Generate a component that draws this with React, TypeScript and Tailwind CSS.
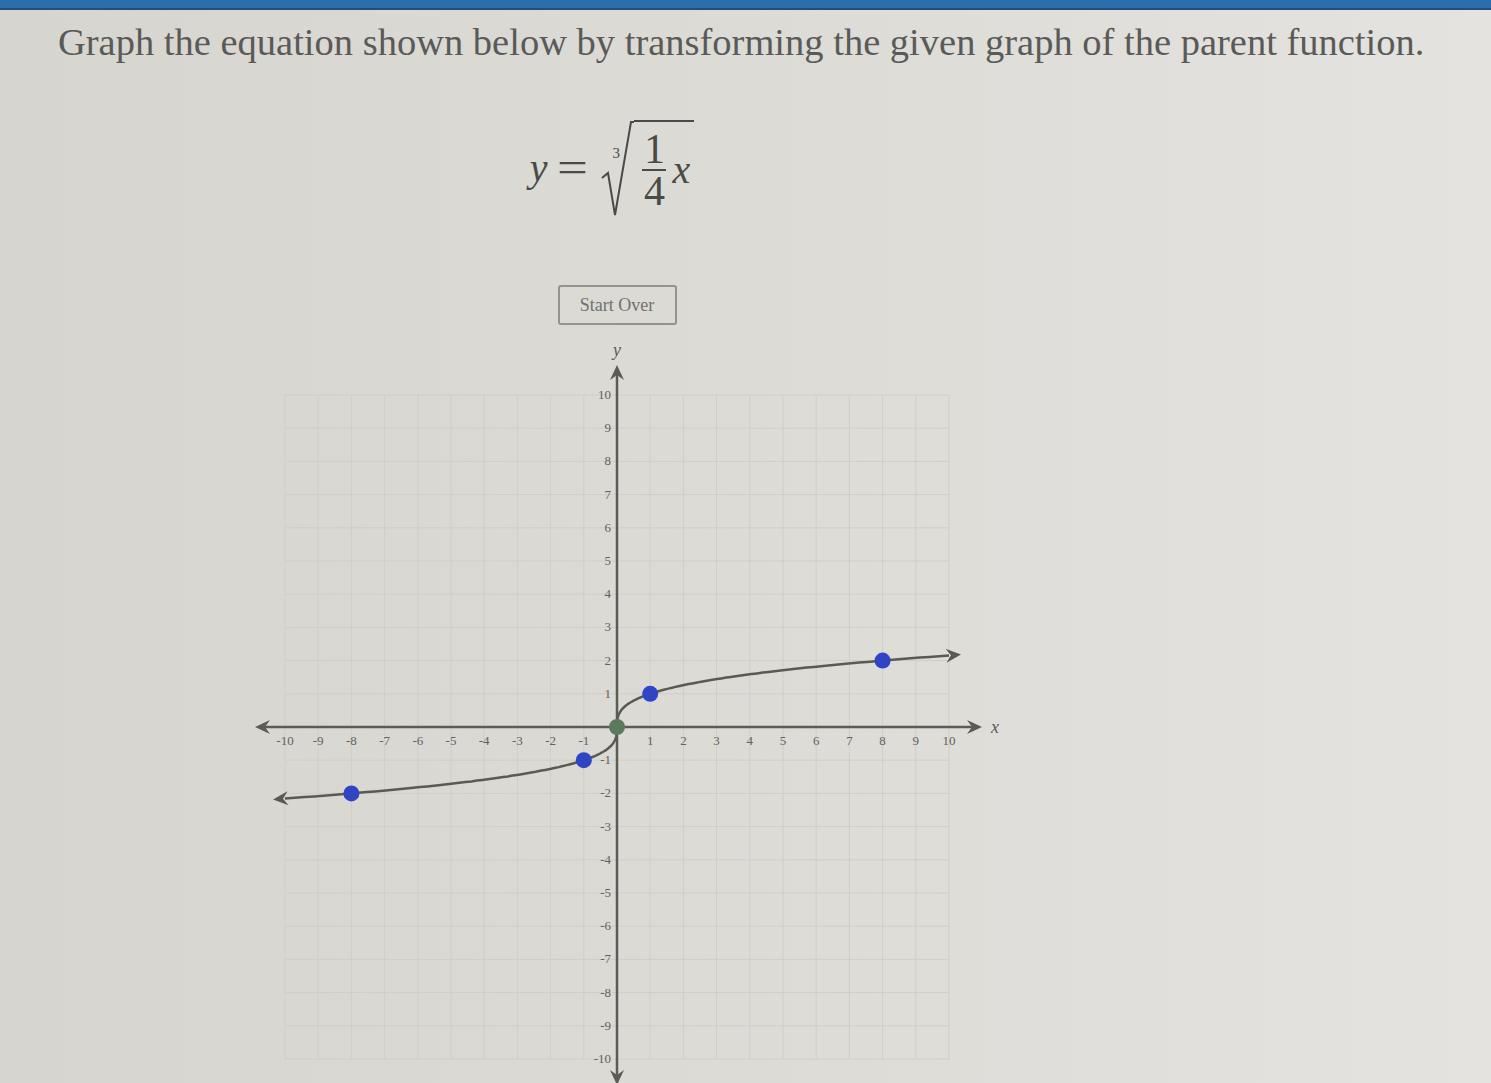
import React from "react";

const U = 33.2;
const OX = 617;
const OY = 727;
const px = (x: number) => OX + U * x;
const py = (y: number) => OY - U * y;
const ticks = Array.from({ length: 21 }, (_, i) => i - 10);

const serif = { fontFamily: '"Liberation Serif", "DejaVu Serif", serif' };

// arrowhead with a notch, tip at (x,y) pointing along angle a (radians)
const arrow = (x: number, y: number, a: number) => {
  const L = 15;
  const W = 7;
  const N = 10;
  const c = Math.cos(a);
  const s = Math.sin(a);
  const p = (dx: number, dy: number) =>
    `${(x + dx * c - dy * s).toFixed(1)},${(y + dx * s + dy * c).toFixed(1)}`;
  return [p(0, 0), p(-L, -W), p(-N, 0), p(-L, W)].join(" ");
};

const Graph = () => {
  const tMax = Math.cbrt(10);
  const pts: string[] = [];
  for (let i = 0; i <= 200; i++) {
    const t = -tMax + (2 * tMax * i) / 200;
    pts.push(`${px(t * t * t).toFixed(1)},${py(t).toFixed(1)}`);
  }
  const slope = 1 / (3 * tMax * tMax);
  const ang = Math.atan2(-slope, 1);
  return (
    <svg width={780} height={748} viewBox="227 335 780 748" className="block mx-auto">
      {ticks.map((i) => (
        <g key={i} stroke="#cfcec9" strokeWidth={1}>
          <line x1={px(i)} y1={py(10)} x2={px(i)} y2={py(-10)} />
          <line x1={px(-10)} y1={py(i)} x2={px(10)} y2={py(i)} />
        </g>
      ))}
      <g stroke="#5c5c57" strokeWidth={2.5}>
        <line x1={262} y1={OY} x2={975} y2={OY} />
        <line x1={OX} y1={372} x2={OX} y2={1078} />
      </g>
      <g fill="#5c5c57">
        <polygon points={arrow(982, OY, 0)} />
        <polygon points={arrow(255, OY, Math.PI)} />
        <polygon points={arrow(OX, 365, -Math.PI / 2)} />
        <polygon points={arrow(OX, 1085, Math.PI / 2)} />
      </g>
      <g fill="#62625d" fontSize={13} style={serif}>
        {ticks
          .filter((i) => i !== 0)
          .map((i) => (
            <text key={`x${i}`} x={px(i)} y={OY + 18} textAnchor="middle">
              {i}
            </text>
          ))}
        {ticks
          .filter((i) => i !== 0)
          .map((i) => (
            <text key={`y${i}`} x={OX - 6} y={py(i) + 4} textAnchor="end">
              {i}
            </text>
          ))}
      </g>
      <text x={991} y={OY + 6} fontSize={18} fontStyle="italic" fill="#5c5c57" style={serif}>
        x
      </text>
      <text x={OX} y={356} fontSize={18} fontStyle="italic" fill="#5c5c57" textAnchor="middle" style={serif}>
        y
      </text>
      <polyline points={pts.join(" ")} fill="none" stroke="#5a5a55" strokeWidth={2.5} />
      <g fill="#5a5a55">
        <polygon points={arrow(px(10) + 12, py(tMax) - 12 * slope, ang)} />
        <polygon points={arrow(px(-10) - 12, py(-tMax) + 12 * slope, Math.PI + ang)} />
      </g>
      <circle cx={OX} cy={OY} r={8} fill="#5b7a5c" />
      {[
        [1, 1],
        [8, 2],
        [-1, -1],
        [-8, -2],
      ].map(([x, y]) => (
        <circle key={`${x}`} cx={px(x)} cy={py(y)} r={8} fill="#2f45c4" />
      ))}
    </svg>
  );
};

const Equation = () => (
  <div className="flex items-center justify-center text-[#4a4a48] pr-[10px]" style={serif}>
    <span className="italic text-[40px] leading-none mr-[12px]">y</span>
    <span className="text-[44px] leading-none mr-[16px] scale-x-125">=</span>
    <div className="relative flex items-stretch">
      <svg width={34} height={100} viewBox="0 0 34 100" className="block">
        <path d="M2 60 L8 55 L15 97 L31 4 L34 4" fill="none" stroke="#4a4a48" strokeWidth={2} />
      </svg>
      <span className="absolute left-[12px] top-[28px] text-[15px] leading-none">3</span>
      <div className="flex items-center border-t-2 border-[#4a4a48] mt-[2px] pl-[8px] pr-[4px] h-[98px]">
        <div className="flex flex-col items-center">
          <span className="text-[42px] leading-[34px]">1</span>
          <div className="w-[24px] h-[2px] bg-[#4a4a48] my-[3px]" />
          <span className="text-[42px] leading-[34px]">4</span>
        </div>
        <span className="italic text-[40px] leading-none ml-[6px]">x</span>
      </div>
    </div>
  </div>
);

export default function App() {
  return (
    <div className="w-full min-h-screen bg-gradient-to-r from-[#d7d5d0] via-[#dcdbd6] to-[#e4e3df] overflow-hidden">
      <div className="h-[10px] bg-[#2a6eab] border-b-2 border-[#1d4f80]" />
      <h1 className="pl-[58px] pt-[10px] text-[38.5px] leading-[44px] text-[#5a5a58]" style={serif}>
        Graph the equation shown below by transforming the given graph of the parent function.
      </h1>
      <div className="w-[1234px]">
        <div className="mt-[54px]">
          <Equation />
        </div>
        <div className="flex justify-center mt-[67px]">
          <button
            className="w-[119px] h-[40px] border-2 border-[#94938f] rounded-[3px] text-[18px] text-[#72716e] bg-transparent"
            style={serif}
          >
            Start Over
          </button>
        </div>
        <div className="mt-[10px]">
          <Graph />
        </div>
      </div>
    </div>
  );
}
